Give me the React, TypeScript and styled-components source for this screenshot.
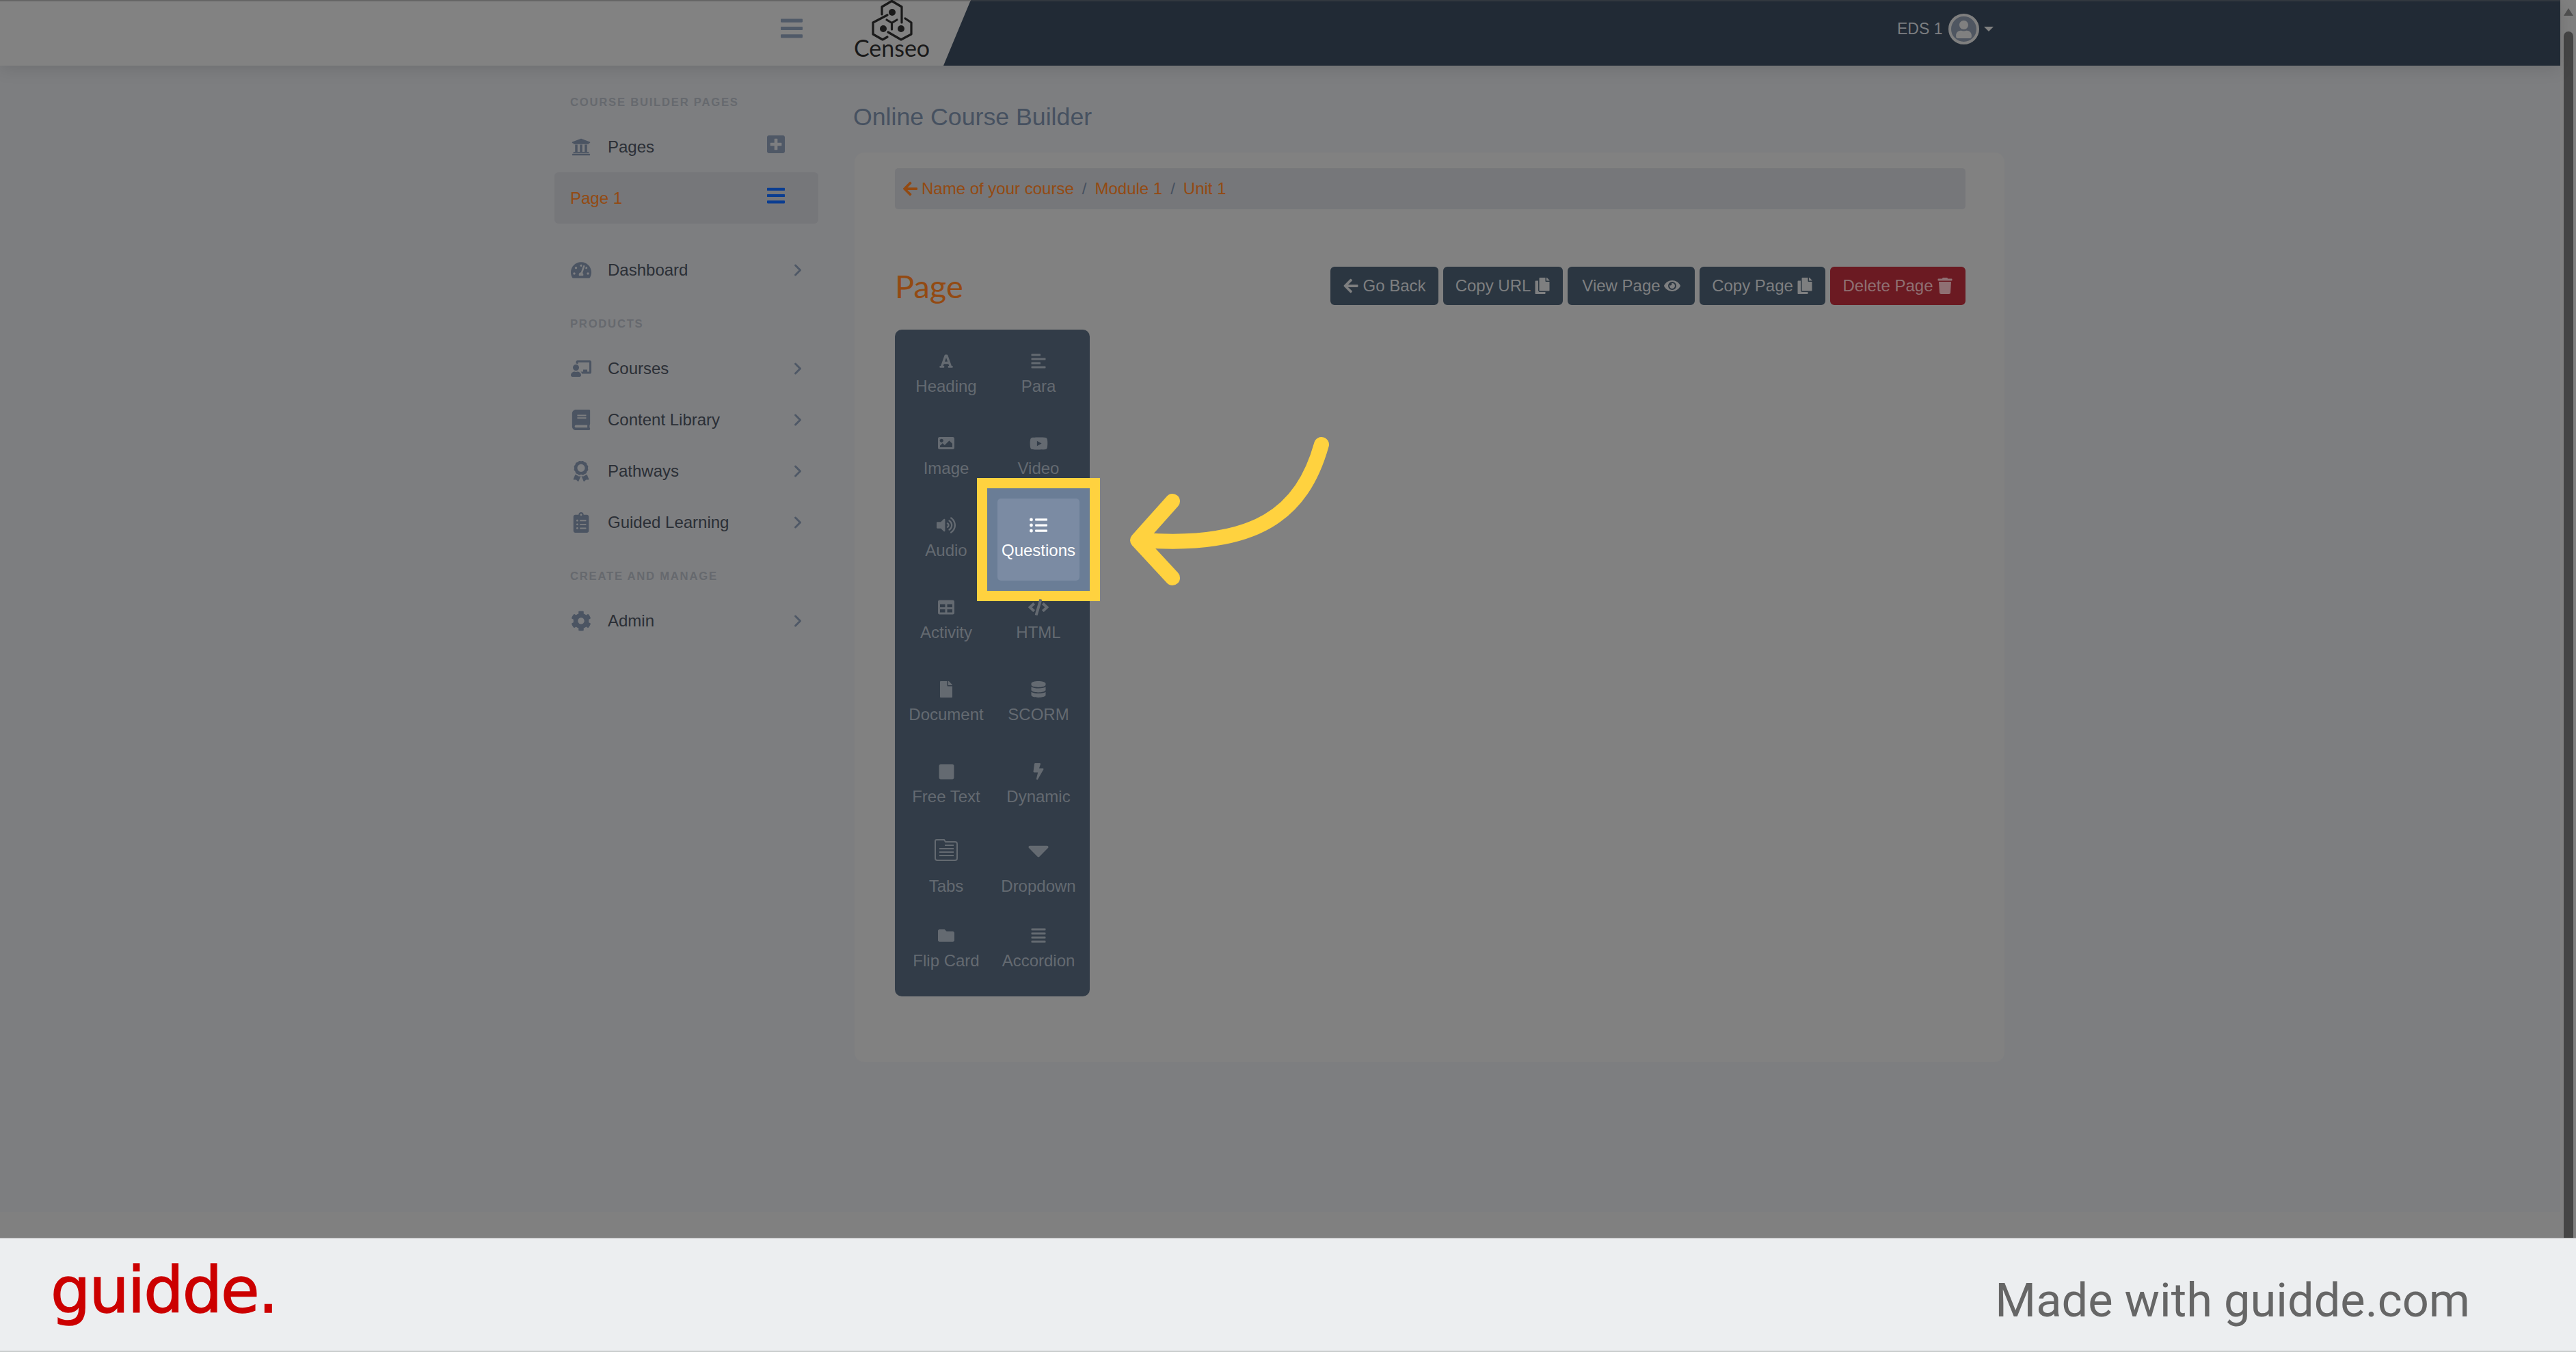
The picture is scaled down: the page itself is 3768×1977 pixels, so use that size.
import React from "react";
import styled, { createGlobalStyle } from "styled-components";
import { ChevronRight } from "lucide-react";
import {
  FaAlignJustify, FaAlignLeft, FaArrowLeft, FaAward, FaBars, FaBolt, FaBook,
  FaCaretDown, FaChalkboardTeacher, FaClipboardList, FaCode, FaCog, FaCopy, FaDatabase, FaEye,
  FaFile, FaFolder, FaFont, FaImage, FaListUl, FaYoutube, FaPlusSquare, FaSquare,
  FaTable, FaTachometerAlt, FaTrash, FaUniversity, FaUser, FaVolumeUp,
} from "react-icons/fa";

const Global = createGlobalStyle`
  html, body { margin: 0; padding: 0; overflow: hidden; }
  body { font-family: "Liberation Sans", Arial, sans-serif; background: #7d7e80; }
`;

const Root = styled.div`
  width: 3768px; height: 1977px; display: flex; flex-direction: column; overflow: hidden;
`;
const Viewport = styled.div`
  height: 1810px; display: flex; flex-direction: row; overflow: hidden;
`;
const Main = styled.div`
  flex: 1; min-width: 0; display: flex; flex-direction: column; background: #7d7e80;
`;
const ScrollTrack = styled.div`
  width: 23px; background: #808080; display: flex; flex-direction: column; align-items: center;
`;
const ScrollArrow = styled.div`
  width: 0; height: 0; margin-top: 12px;
  border-left: 7px solid transparent; border-right: 7px solid transparent; border-bottom: 11px solid #505050;
`;
const ScrollThumb = styled.div`
  width: 14px; flex: 1; margin-top: 23px; background: #454545; border-radius: 7px 7px 0 0;
`;

const Header = styled.header`
  height: 96px; flex: none; display: flex; background: #212a35; position: relative; z-index: 2;
  box-shadow: inset 0 2px #32383f, 0 4px 24px rgba(0, 0, 0, 0.12);
`;
const HeaderLeft = styled.div`
  width: 1420px; flex: none; display: flex; align-items: flex-start; background: #828282;
  box-shadow: inset 0 2px #666666; padding-left: 1142px; box-sizing: border-box;
  clip-path: polygon(0 0, 100% 0, 1380px 100%, 0 100%);
`;
const Burger = styled.span`
  margin-top: 27px; color: #505a68; display: flex; width: 32px; height: 28px;
  svg { width: 32px; height: 37px; margin-top: -4.5px; }
`;
const Logo = styled.div`
  margin-left: 76px; width: 109px; display: flex; flex-direction: column; align-items: center;
`;
const LogoMark = styled.svg`
  width: 88px; height: 60px; flex: none;
`;
const LogoName = styled.span`
  font-family: Lato, "Liberation Sans", sans-serif; font-size: 34px; line-height: 30px; color: #1a1a1a; margin-top: -5px;
`;
const HeaderRight = styled.div`
  flex: 1; display: flex; align-items: flex-start; padding: 20px 0 0 1355px;
`;
const UserName = styled.span`
  font-size: 23px; line-height: 45px; color: #7c7e81; margin-right: 8.5px;
`;
const Avatar = styled.span`
  width: 45px; height: 45px; box-sizing: border-box; border: 4px solid #7f7f7f; border-radius: 50%;
  background: #4f5661; color: #808080; display: flex; align-items: center; justify-content: center;
  svg { width: 23px; height: 26px; }
`;
const Caret = styled.span`
  width: 0; height: 0; margin: 19px 0 0 7px;
  border-left: 7px solid transparent; border-right: 7px solid transparent; border-top: 7px solid #808080;
`;

const Body = styled.div`
  flex: 1; min-height: 0; display: flex; padding: 42px 0 0 811px;
`;
const Sidebar = styled.nav`
  width: 386px; flex: none;
`;
const SectionLabel = styled.div<{ $first?: boolean }>`
  height: 24px; line-height: 24px; margin: ${(p) => (p.$first ? "0" : "30px")} 0 15px 23px;
  font-size: 16.67px; font-weight: 700; letter-spacing: 1.75px; color: #66696e; white-space: nowrap;
`;
const NavRow = styled.div<{ $active?: boolean; $gap?: boolean }>`
  height: 75px; display: flex; align-items: center; padding: 0 25px 0 23px; box-sizing: border-box;
  font-size: 24px; color: ${(p) => (p.$active ? "#934a12" : "#2b2f36")};
  background: ${(p) => (p.$active ? "#76777a" : "transparent")};
  border-radius: ${(p) => (p.$active ? "6px" : "0")};
  margin-top: ${(p) => (p.$gap ? "30px" : "0")};
`;
const NavIcon = styled.span<{ $small?: boolean }>`
  width: 32px; margin-right: 23px; flex: none; display: flex; justify-content: center; color: #4b5462;
  svg { height: ${(p) => (p.$small ? "28px" : "30px")}; width: auto; max-width: 30px; display: block; }
`;
const NavText = styled.span`
  flex: 1;
`;
const NavChevron = styled.span`
  display: flex; color: #4f5866; margin-right: -9px;
`;
const NavTool = styled.span<{ $color: string }>`
  display: flex; color: ${(p) => p.$color}; margin: -8px 24px 0 0;
  svg { width: 26px; height: 30px; display: block; }
`;

const Content = styled.main`
  width: 1682px; flex: none; margin-left: 53px;
`;
const PageTitle = styled.h1`
  margin: 12px 0 30px -2px; font-size: 35.7px; line-height: 43px; font-weight: 400; color: #465160;
`;
const Card = styled.section`
  background: #818181; border-radius: 14px; padding: 23px 57px 96px 59px; height: 1330px; box-sizing: border-box;
`;
const Breadcrumb = styled.div`
  height: 60px; box-sizing: border-box; display: flex; align-items: center; background: #76777a;
  border-radius: 5px; padding-left: 12px; font-size: 24px;
  svg { width: 21px; height: 24px; margin-right: 6px; color: #934a12; }
`;
const Crumb = styled.span`
  color: #934a12;
`;
const CrumbSep = styled.span`
  color: #465160; margin: 0 12px;
`;
const TitleRow = styled.div`
  display: flex; align-items: center; justify-content: space-between; margin-top: 84px; height: 56px;
`;
const PageName = styled.h2`
  margin: 0; font-family: Lato, "Liberation Sans", sans-serif; font-weight: 400; font-size: 47px;
  line-height: 56px; color: #934a12;
`;
const Buttons = styled.div`
  display: flex; gap: 7px;
`;
const Button = styled.button<{ $danger?: boolean; $w: number }>`
  height: 56px; width: ${(p) => p.$w}px; box-sizing: border-box; border: none; border-radius: 6px; padding: 0;
  display: flex; align-items: center; justify-content: center; gap: 5px; font-family: inherit; font-size: 24px;
  background: ${(p) => (p.$danger ? "#6b1a22" : "#2b3641")};
  color: ${(p) => (p.$danger ? "#8f7073" : "#7e7f80")};
  svg { height: 24px; width: auto; }
`;

const Panel = styled.div`
  width: 285px; box-sizing: border-box; margin-top: 36px; background: #323c48; border-radius: 10px;
  padding: 7px 7.5px 8px; display: grid; grid-template-columns: 135px 135px; grid-auto-rows: 120px;
`;
const Cell = styled.div`
  position: relative; display: flex; justify-content: center;
`;
const CellBody = styled.div<{ $active?: boolean; $tall?: boolean }>`
  position: relative; width: 120px; height: 120px; box-sizing: border-box; border-radius: 5px;
  padding-top: ${(p) => (p.$tall ? "19px" : "27px")};
  display: flex; flex-direction: column; align-items: center;
  background: ${(p) => (p.$active ? "#7b8ba3" : "transparent")};
  color: ${(p) => (p.$active ? "#ffffff" : "#646a71")};
`;
const CellIcon = styled.span<{ $tall?: boolean }>`
  height: ${(p) => (p.$tall ? "30px" : "24px")}; display: flex; align-items: center; justify-content: center;
`;
const CellLabel = styled.span<{ $tall?: boolean }>`
  margin-top: ${(p) => (p.$tall ? "24px" : "11px")}; font-size: 24px; line-height: 28px; white-space: nowrap;
`;
const Spot = styled.div`
  position: absolute; inset: -30px -22.5px; border: 15px solid #ffd23f; background: #6a7d96;
`;
const Arrow = styled.svg`
  position: absolute; left: 1640px; top: 630px; width: 310px; height: 240px; overflow: visible; z-index: 3;
`;

const Tail = styled.div`
  height: 38px; flex: none; background: #808080; margin-top: auto;
`;

const Footer = styled.footer`
  flex: 1; display: flex; align-items: flex-start; justify-content: space-between; background: #eceef0;
  border-top: 1px solid #bcbcbc; border-bottom: 2px solid #c9cdcd; box-sizing: border-box; padding: 0 155px 0 74px;
`;
const Brand = styled.span`
  font-family: "DejaVu Sans", Lato, sans-serif; font-size: 92px; line-height: 102px;
  color: #cc0000; margin-top: 26px; letter-spacing: -2px; -webkit-text-stroke: 1.5px #cc0000;
`;
const Made = styled.span`
  font-family: Roboto, "Liberation Sans", sans-serif; font-size: 68.6px; line-height: 80px; color: #666666; margin-top: 50.5px;
`;

const TabsGlyph = () => (
  <svg width="34" height="32" viewBox="0 0 34 32" fill="none" stroke="currentColor" strokeWidth="2">
    <path d="M3 1h11l2 3h14a3 3 0 0 1 3 3v21a3 3 0 0 1-3 3H4a3 3 0 0 1-3-3V3a2 2 0 0 1 2-2z" />
    <path d="M15 9h13M7 14h21M7 19h21M7 24h21" />
  </svg>
);

type Tool = { name: string; icon: React.ReactNode; tall?: boolean; active?: boolean };
const tools: Tool[] = [
  { name: "Heading", icon: <FaFont size={22} /> },
  { name: "Para", icon: <FaAlignLeft size={24} /> },
  { name: "Image", icon: <FaImage size={24} /> },
  { name: "Video", icon: <FaYoutube size={27} /> },
  { name: "Audio", icon: <FaVolumeUp size={28} /> },
  { name: "Questions", icon: <FaListUl size={26} />, active: true },
  { name: "Activity", icon: <FaTable size={24} /> },
  { name: "HTML", icon: <FaCode size={30} /> },
  { name: "Document", icon: <FaFile size={24} /> },
  { name: "SCORM", icon: <FaDatabase size={24} /> },
  { name: "Free Text", icon: <FaSquare size={25} /> },
  { name: "Dynamic", icon: <FaBolt size={24} /> },
  { name: "Tabs", icon: <TabsGlyph />, tall: true },
  { name: "Dropdown", icon: <FaCaretDown size={50} />, tall: true },
  { name: "Flip Card", icon: <FaFolder size={24} /> },
  { name: "Accordion", icon: <FaAlignJustify size={24} /> },
];

const Chevron = () => (
  <NavChevron><ChevronRight size={28} strokeWidth={2.5} /></NavChevron>
);

const NavItem = ({ icon, label }: { icon: React.ReactNode; label: string }) => (
  <NavRow>
    <NavIcon>{icon}</NavIcon>
    <NavText>{label}</NavText>
    <Chevron />
  </NavRow>
);

export default function App() {
  return (
    <Root>
      <Global />
      <Viewport>
        <Main>
          <Header>
            <HeaderLeft>
              <Burger><FaBars /></Burger>
              <Logo>
                <LogoMark viewBox="0 0 88 60" fill="none" stroke="#1a1a1a" strokeWidth="3.2" strokeLinejoin="round" strokeLinecap="round">
                  <path d="M29 21V10L43.5 1.5L58 10V33" />
                  <path d="M37 22L16 33V50L30 58L37 54" />
                  <path d="M63 27L72 33V50L57 58L38 47" />
                  <path d="M36 29L43.5 33.5L51 29M43.5 33.5V43" />
                  <circle cx="44" cy="18" r="5" fill="#1a1a1a" stroke="none" />
                  <circle cx="31" cy="42" r="5" fill="#1a1a1a" stroke="none" />
                  <circle cx="57" cy="42" r="5" fill="#1a1a1a" stroke="none" />
                </LogoMark>
                <LogoName>Censeo</LogoName>
              </Logo>
            </HeaderLeft>
            <HeaderRight>
              <UserName>EDS 1</UserName>
              <Avatar><FaUser /></Avatar>
              <Caret />
            </HeaderRight>
          </Header>
          <Body>
            <Sidebar>
              <SectionLabel $first>COURSE BUILDER PAGES</SectionLabel>
              <NavRow>
                <NavIcon $small><FaUniversity /></NavIcon>
                <NavText>Pages</NavText>
                <NavTool $color="#4f5866"><FaPlusSquare /></NavTool>
              </NavRow>
              <NavRow $active>
                <NavText>Page 1</NavText>
                <NavTool $color="#0a3d91"><FaBars /></NavTool>
              </NavRow>
              <NavRow $gap>
                <NavIcon><FaTachometerAlt /></NavIcon>
                <NavText>Dashboard</NavText>
                <Chevron />
              </NavRow>
              <SectionLabel>PRODUCTS</SectionLabel>
              <NavItem icon={<FaChalkboardTeacher />} label="Courses" />
              <NavItem icon={<FaBook />} label="Content Library" />
              <NavItem icon={<FaAward />} label="Pathways" />
              <NavItem icon={<FaClipboardList />} label="Guided Learning" />
              <SectionLabel>CREATE AND MANAGE</SectionLabel>
              <NavItem icon={<FaCog />} label="Admin" />
            </Sidebar>
            <Content>
              <PageTitle>Online Course Builder</PageTitle>
              <Card>
                <Breadcrumb>
                  <FaArrowLeft />
                  <Crumb>Name of your course</Crumb>
                  <CrumbSep>/</CrumbSep>
                  <Crumb>Module 1</Crumb>
                  <CrumbSep>/</CrumbSep>
                  <Crumb>Unit 1</Crumb>
                </Breadcrumb>
                <TitleRow>
                  <PageName>Page</PageName>
                  <Buttons>
                    <Button $w={158}><FaArrowLeft />Go Back</Button>
                    <Button $w={175}>Copy URL<FaCopy /></Button>
                    <Button $w={186}>View Page<FaEye /></Button>
                    <Button $w={184}>Copy Page<FaCopy /></Button>
                    <Button $w={198} $danger>Delete Page<FaTrash /></Button>
                  </Buttons>
                </TitleRow>
                <Panel>
                  {tools.map((t) => (
                    <Cell key={t.name}>
                      {t.active && <Spot />}
                      <CellBody $active={t.active} $tall={t.tall}>
                        <CellIcon $tall={t.tall}>{t.icon}</CellIcon>
                        <CellLabel $tall={t.tall}>{t.name}</CellLabel>
                      </CellBody>
                    </Cell>
                  ))}
                </Panel>
              </Card>
            </Content>
          </Body>
          <Tail />
        </Main>
        <ScrollTrack>
          <ScrollArrow />
          <ScrollThumb />
        </ScrollTrack>
      </Viewport>
      <Footer>
        <Brand>guidde.</Brand>
        <Made>Made with guidde.com</Made>
      </Footer>
      <Arrow viewBox="1640 630 310 240" fill="none" stroke="#ffd23f" strokeWidth="22" strokeLinecap="round" strokeLinejoin="round">
        <path d="M1933 650C1905 750 1838 802 1672 790" />
        <path d="M1715 733L1664 790L1715 845" />
      </Arrow>
    </Root>
  );
}
